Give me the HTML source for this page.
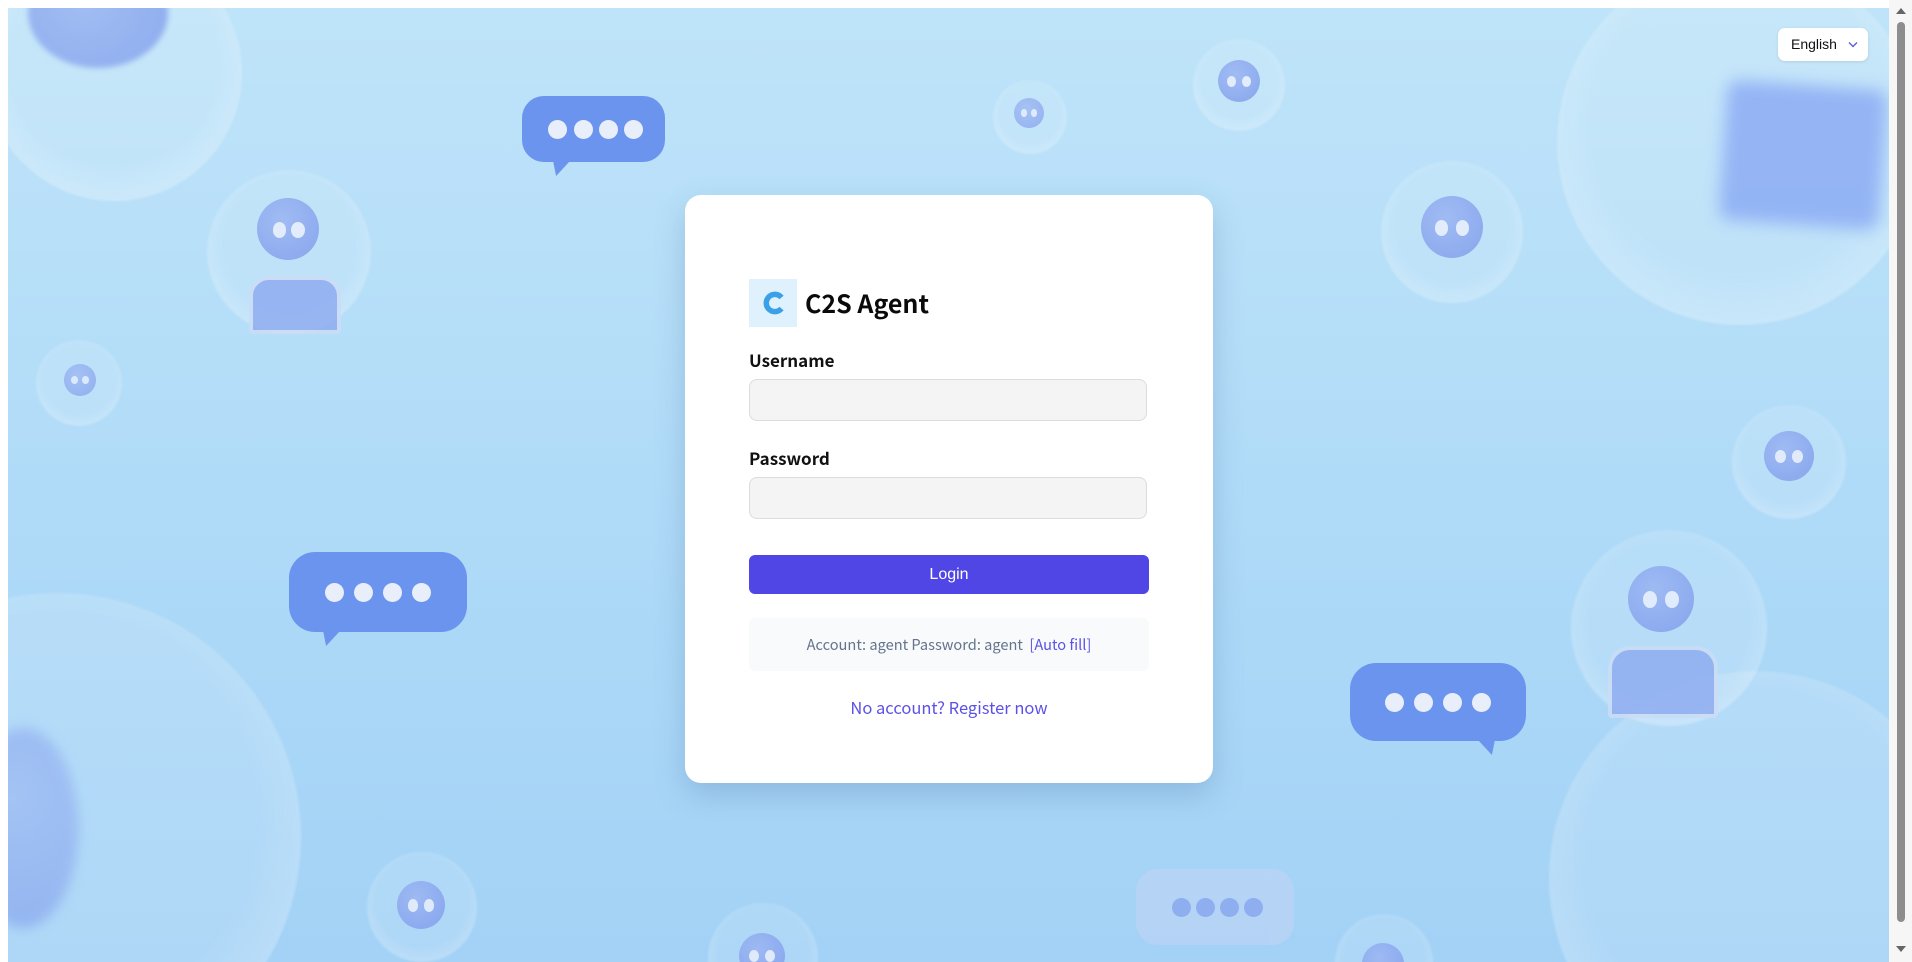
<!DOCTYPE html>
<html><head><meta charset="utf-8"><style>
*{box-sizing:border-box;margin:0;padding:0}
html,body{width:1912px;height:962px;overflow:hidden;background:#fff;font-family:"Liberation Sans",sans-serif}
#bg{position:absolute;left:8px;top:8px;width:1881px;height:954px;overflow:hidden;background:linear-gradient(180deg,#bfe4f9 0%,#b0dbf8 50%,#a3d2f6 100%)}
.b{position:absolute;border-radius:50%;background:radial-gradient(circle at 50% 45%,rgba(255,255,255,.12) 55%,rgba(255,255,255,.5) 100%);filter:blur(1px)}
.h{position:absolute;border-radius:50%;background:radial-gradient(circle at 40% 35%,#9bb5f3,#7e9beb);opacity:.85}
.e{position:absolute;width:22%;height:26%;border-radius:50%;background:#e8eefc;top:38%}
.c{position:absolute;border-radius:22px;background:#6b94ee}
.c i{position:absolute;width:19px;height:19px;border-radius:50%;background:#e9eefb;top:50%;margin-top:-9px}
.t{position:absolute;width:0;height:0;border-left:9px solid transparent;border-right:9px solid transparent;border-top:16px solid #6b94ee}
#sb{position:absolute;left:1889px;top:0;width:23px;height:962px;background:#f6f6f6;overflow:hidden}
#sb .th{position:absolute;left:8px;top:22px;width:8px;height:900px;border-radius:4px;background:#8d8d8d}
.card{position:absolute;left:685px;top:195px;width:528px;height:588px;background:#fff;border-radius:16px;box-shadow:0 12px 30px rgba(60,100,150,.25)}
.f{font-family:"Noto Sans CJK SC","Liberation Sans",sans-serif}
.lbl{position:absolute;left:64px;font-weight:bold;font-size:17px;color:#111;line-height:24px}
.inp{position:absolute;left:64px;width:398px;height:42px;background:#f4f4f4;border:1px solid #dcdcdc;border-radius:8px}
</style></head><body>
<div id="bg">
 <div class="b" style="left:-22px;top:-63px;width:256px;height:256px"></div>
 <div class="h" style="left:20px;top:-50px;width:140px;height:110px;opacity:.8;filter:blur(3px)"></div>
 <div class="b" style="left:1549px;top:-49px;width:366px;height:366px"></div>
 <div style="position:absolute;left:1715px;top:77px;width:160px;height:140px;background:#8cacf4;filter:blur(8px);transform:rotate(4deg);border-radius:12px;opacity:.85"></div>
 <div class="b" style="left:-195px;top:585px;width:488px;height:488px"></div>
 <div class="h" style="left:-40px;top:720px;width:110px;height:200px;opacity:.6;filter:blur(6px)"></div>
 <div class="b" style="left:1541px;top:663px;width:414px;height:414px"></div>

 <div class="b" style="left:199px;top:162px;width:164px;height:164px"></div>
 <div class="h" style="left:249px;top:190px;width:62px;height:62px"><div class="e" style="left:25%"></div><div class="e" style="left:55%"></div></div>
 <div style="position:absolute;left:241px;top:268px;width:92px;height:58px;background:#8fadf0;border-radius:20px 20px 4px 4px;border:4px solid #cddcf6;opacity:.85"></div>

 <div class="b" style="left:28px;top:332px;width:86px;height:86px"></div>
 <div class="h" style="left:56px;top:356px;width:32px;height:32px;opacity:.7"><div class="e" style="left:22%"></div><div class="e" style="left:56%"></div></div>
 <div class="b" style="left:985px;top:72px;width:74px;height:74px"></div>
 <div class="h" style="left:1006px;top:90px;width:30px;height:30px;opacity:.7"><div class="e" style="left:22%"></div><div class="e" style="left:56%"></div></div>
 <div class="b" style="left:1185px;top:31px;width:92px;height:92px"></div>
 <div class="h" style="left:1210px;top:52px;width:42px;height:42px"><div class="e" style="left:22%"></div><div class="e" style="left:56%"></div></div>
 <div class="b" style="left:1373px;top:153px;width:142px;height:142px"></div>
 <div class="h" style="left:1413px;top:188px;width:62px;height:62px"><div class="e" style="left:22%"></div><div class="e" style="left:56%"></div></div>
 <div class="b" style="left:1724px;top:397px;width:114px;height:114px"></div>
 <div class="h" style="left:1756px;top:423px;width:50px;height:50px"><div class="e" style="left:22%"></div><div class="e" style="left:56%"></div></div>
 <div class="b" style="left:1563px;top:522px;width:196px;height:196px"></div>
 <div class="h" style="left:1620px;top:558px;width:66px;height:66px"><div class="e" style="left:22%"></div><div class="e" style="left:56%"></div></div>
 <div style="position:absolute;left:1600px;top:638px;width:110px;height:72px;background:#8fadf0;border-radius:22px 22px 4px 4px;border:4px solid #cddcf6;opacity:.85"></div>
 <div class="b" style="left:359px;top:844px;width:110px;height:110px"></div>
 <div class="h" style="left:389px;top:873px;width:48px;height:48px"><div class="e" style="left:22%"></div><div class="e" style="left:56%"></div></div>
 <div class="b" style="left:700px;top:895px;width:110px;height:110px"></div>
 <div class="h" style="left:731px;top:925px;width:46px;height:46px"><div class="e" style="left:22%"></div><div class="e" style="left:56%"></div></div>
 <div class="b" style="left:1327px;top:906px;width:98px;height:98px"></div>
 <div class="h" style="left:1354px;top:935px;width:42px;height:42px"></div>

 <div class="c" style="left:514px;top:88px;width:143px;height:66px"><i style="left:26px"></i><i style="left:52px"></i><i style="left:77px"></i><i style="left:102px"></i></div>
 <div class="t" style="left:542px;top:152px;transform:skewX(-20deg)"></div>
 <div class="c" style="left:281px;top:544px;width:178px;height:80px;border-radius:26px"><i style="left:36px"></i><i style="left:65px"></i><i style="left:94px"></i><i style="left:123px"></i></div>
 <div class="t" style="left:312px;top:622px;transform:skewX(-20deg)"></div>
 <div class="c" style="left:1342px;top:655px;width:176px;height:78px;border-radius:26px"><i style="left:35px"></i><i style="left:64px"></i><i style="left:93px"></i><i style="left:122px"></i></div>
 <div class="t" style="left:1472px;top:731px;transform:skewX(20deg)"></div>
 <div class="c" style="left:1128px;top:861px;width:158px;height:76px;background:#b9d3f5;opacity:.8"><i style="left:36px;background:#8aa6ee"></i><i style="left:60px;background:#8aa6ee"></i><i style="left:84px;background:#8aa6ee"></i><i style="left:108px;background:#8aa6ee"></i></div>

 <div style="position:absolute;left:1770px;top:20px;width:90px;height:33px;background:#fff;border-radius:7px;box-shadow:0 1px 3px rgba(0,0,0,.1);font-size:14px;color:#111;line-height:33px;padding-left:13px">English<svg style="position:absolute;left:70px;top:13px" width="10" height="7" viewBox="0 0 10 7"><path d="M1 1.5L5 5.5L9 1.5" fill="none" stroke="#5b5ce0" stroke-width="1.4"/></svg></div>
</div>

<div class="card f">
 <div style="position:absolute;left:64px;top:84px;width:48px;height:48px;background:#dff1fd"></div>
 <svg style="position:absolute;left:76px;top:96px" width="25" height="24" viewBox="0 0 25 24"><path d="M20.5 6.5A8.6 8.6 0 1 0 20.5 17.5" fill="none" stroke="#3aa0e8" stroke-width="5.5"/></svg>
 <div style="position:absolute;left:120px;top:90px;font-weight:bold;font-size:25px;line-height:36px;color:#0a0a0a">C2S Agent</div>
 <div class="lbl" style="top:153px">Username</div>
 <div class="inp" style="top:184px"></div>
 <div class="lbl" style="top:251px">Password</div>
 <div class="inp" style="top:282px"></div>
 <div style="position:absolute;left:64px;top:360px;width:400px;height:39px;background:#4f46e5;border-radius:6px;color:#fff;font-size:16px;text-align:center;line-height:39px;font-family:'Liberation Sans',sans-serif">Login</div>
 <div style="position:absolute;left:64px;top:423px;width:400px;height:53px;background:#f8fafc;border-radius:6px;text-align:center;line-height:53px;font-size:14.6px;color:#64748b">Account: agent Password: agent &nbsp;<span style="color:#5b51e6">[Auto fill]</span></div>
 <div style="position:absolute;left:0;width:528px;top:499px;line-height:26px;text-align:center;font-size:16.5px;color:#5b51e6">No account? Register now</div>
</div>

<div id="sb"><div class="th"></div>
<svg style="position:absolute;left:7px;top:8px" width="10" height="6"><path d="M0 6L5 0L10 6Z" fill="#666"/></svg>
<svg style="position:absolute;left:7px;top:946px" width="10" height="6"><path d="M0 0L5 6L10 0Z" fill="#666"/></svg></div>
</body></html>
